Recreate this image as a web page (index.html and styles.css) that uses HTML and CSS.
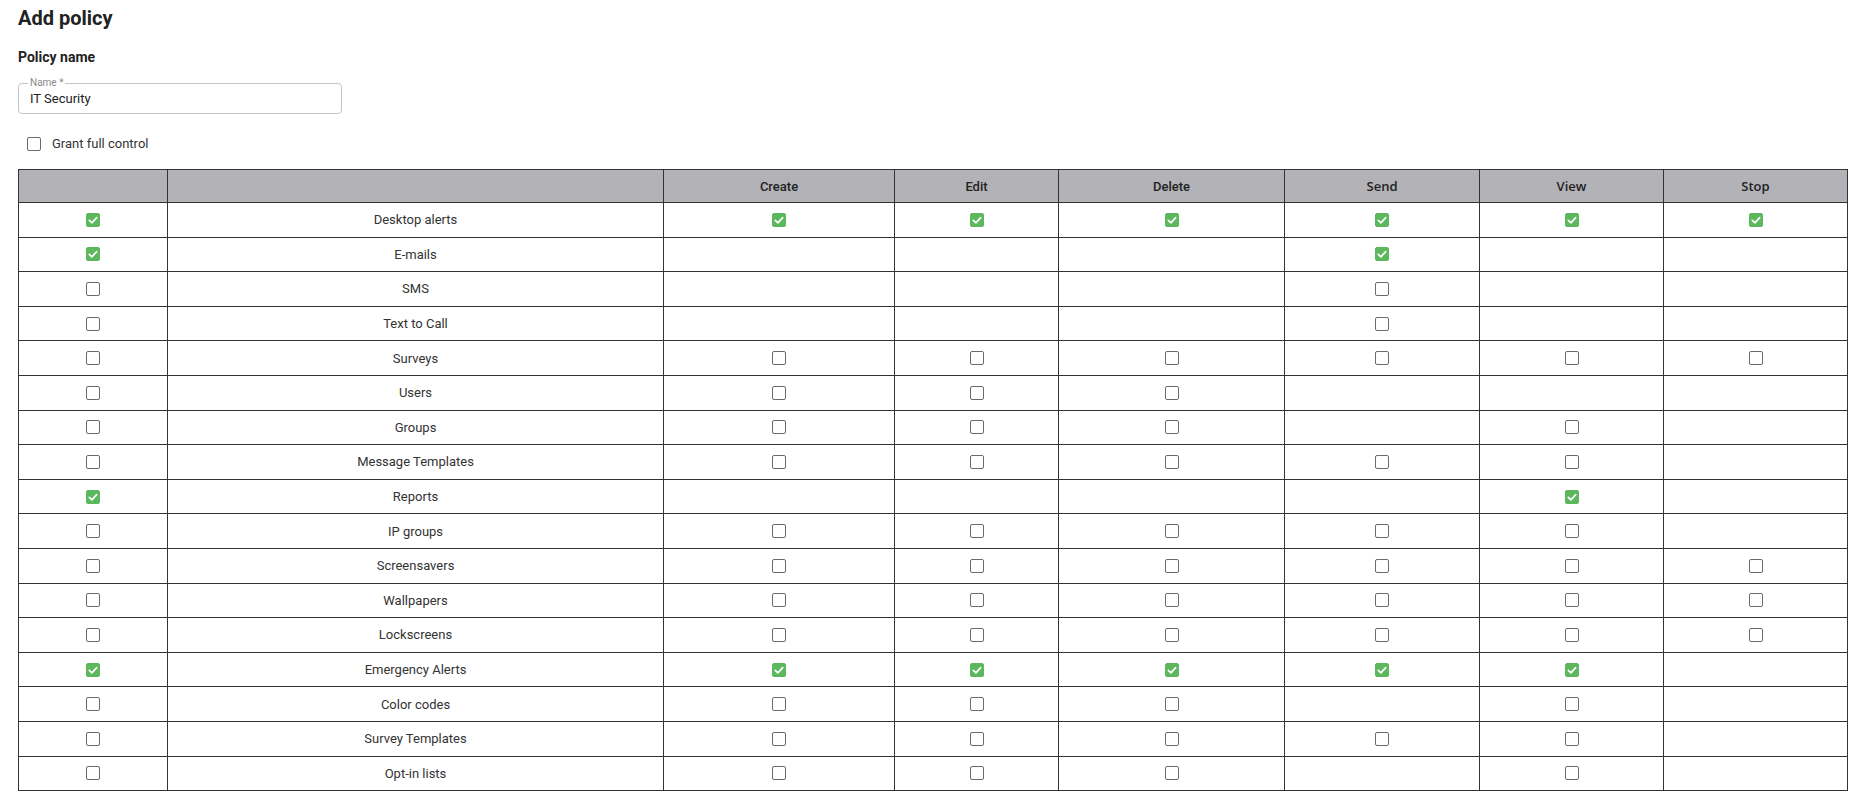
FILE: index.html
```html
<!DOCTYPE html>
<html lang="en">
<head>
<meta charset="utf-8">
<title>Add policy</title>
<link rel="stylesheet" href="styles.css">
</head>
<body>
<div class="page">
  <h1 class="title">Add policy</h1>
  <h2 class="section">Policy name</h2>
  <fieldset class="field">
    <legend class="field-label">Name *</legend>
    <input class="field-input" type="text" value="IT Security">
  </fieldset>
  <label class="grant">
    <span class="cb"></span>
    <span class="grant-text">Grant full control</span>
  </label>
  <table class="perm">
    <colgroup>
      <col class="c1"><col class="c2"><col class="c3"><col class="c4"><col class="c5"><col class="c6"><col class="c7"><col class="c8">
    </colgroup>
    <thead>
      <tr>
        <th></th><th></th>
        <th class="ha">Create</th><th class="ha">Edit</th><th class="ha">Delete</th>
        <th class="hb">Send</th><th class="hb">View</th><th class="hb">Stop</th>
      </tr>
    </thead>
    <tbody id="rows"></tbody>
  </table>
</div>
<script src="app.js"></script>
</body>
</html>
```

FILE: app.js
```js
(function () {
  var data = [
    ["Desktop alerts", "c", "c", "c", "c", "c", "c", "c"],
    ["E-mails", "c", "", "", "", "c", "", ""],
    ["SMS", "u", "", "", "", "u", "", ""],
    ["Text to Call", "u", "", "", "", "u", "", ""],
    ["Surveys", "u", "u", "u", "u", "u", "u", "u"],
    ["Users", "u", "u", "u", "u", "", "", ""],
    ["Groups", "u", "u", "u", "u", "", "u", ""],
    ["Message Templates", "u", "u", "u", "u", "u", "u", ""],
    ["Reports", "c", "", "", "", "", "c", ""],
    ["IP groups", "u", "u", "u", "u", "u", "u", ""],
    ["Screensavers", "u", "u", "u", "u", "u", "u", "u"],
    ["Wallpapers", "u", "u", "u", "u", "u", "u", "u"],
    ["Lockscreens", "u", "u", "u", "u", "u", "u", "u"],
    ["Emergency Alerts", "c", "c", "c", "c", "c", "c", ""],
    ["Color codes", "u", "u", "u", "u", "", "u", ""],
    ["Survey Templates", "u", "u", "u", "u", "u", "u", ""],
    ["Opt-in lists", "u", "u", "u", "u", "", "u", ""]
  ];
  var check = '<svg viewBox="0 0 14 14" width="14" height="14"><path d="M3.3 7.3 L5.9 9.8 L10.7 4.6" fill="none" stroke="#fff" stroke-width="1.7" stroke-linecap="round" stroke-linejoin="round"/></svg>';
  function box(v) {
    if (v === "c") return '<span class="cb on">' + check + '</span>';
    if (v === "u") return '<span class="cb"></span>';
    return "";
  }
  var html = "";
  data.forEach(function (r) {
    html += "<tr>";
    html += '<td class="ck">' + box(r[1]) + "</td>";
    html += '<td class="name">' + r[0] + "</td>";
    for (var i = 2; i < 8; i++) html += '<td class="ck">' + box(r[i]) + "</td>";
    html += "</tr>";
  });
  document.getElementById("rows").innerHTML = html;
})();
```

FILE: styles.css
```css
* { box-sizing: border-box; }
html, body { margin: 0; padding: 0; background: #fff; }
body {
  font-family: Roboto, "Liberation Sans", Arial, sans-serif;
  color: #333;
}
.page {
  padding: 6px 0 0 18px;
}
.title {
  margin: 0;
  font-size: 20px;
  line-height: 24px;
  font-weight: 700;
  color: #222;
}
.section {
  margin: 17px 0 0;
  font-size: 14px;
  line-height: 20px;
  font-weight: 700;
  color: #222;
}
.field {
  margin: 10px 0 0;
  width: 324px;
  min-width: 0;
  border: 1px solid #c4c4c4;
  border-radius: 4px;
  padding: 2px 11px 6px 9px;
}
.field-label {
  padding: 0 2px;
  font-size: 10px;
  line-height: 12px;
  color: #8a8a8a;
}
.field-input {
  display: block;
  width: 100%;
  border: 0;
  outline: none;
  padding: 0 2px;
  margin: 0;
  height: 16px;
  font-family: Roboto, "Liberation Sans", Arial, sans-serif;
  font-size: 13px;
  line-height: 16px;
  color: #222;
  background: transparent;
}
.grant {
  display: flex;
  align-items: center;
  gap: 11px;
  height: 20px;
  margin: 20px 0 0 9px;
  font-size: 13px;
  line-height: 20px;
  color: #333;
}
.cb {
  display: block;
  width: 14px;
  height: 14px;
  border: 1px solid #6b6b6b;
  border-radius: 2px;
  background: #fff;
  margin: 0 auto;
}
.grant .cb { margin: 0; }
.cb.on {
  background: #5cb85c;
  border-color: #5cb85c;
  position: relative;
}
.cb.on svg {
  display: block;
  margin: -1px;
}
.perm {
  margin-top: 15px;
  width: 1830px;
  border-collapse: collapse;
  table-layout: fixed;
  border: 1px solid #333;
}
.c1 { width: 149px; }
.c2 { width: 496px; }
.c3 { width: 231px; }
.c4 { width: 164px; }
.c5 { width: 226px; }
.c6 { width: 195px; }
.c7 { width: 184px; }
.c8 { width: 184px; }
.perm th, .perm td {
  border: 1px solid #333;
  padding: 0;
  text-align: center;
  vertical-align: middle;
}
.perm thead tr { height: 33px; }
.perm th {
  background: #b2b2b7;
  color: #222;
  font-size: 13px;
}
.perm th.ha {
  font-family: Roboto, "Liberation Sans", Arial, sans-serif;
  font-weight: 500;
}
.perm th.hb {
  font-family: "Open Sans", "Liberation Sans", Arial, sans-serif;
  font-weight: 600;
}
.perm tbody tr { height: 34.6px; }
.perm td.name {
  font-size: 13px;
  color: #333;
}
```
